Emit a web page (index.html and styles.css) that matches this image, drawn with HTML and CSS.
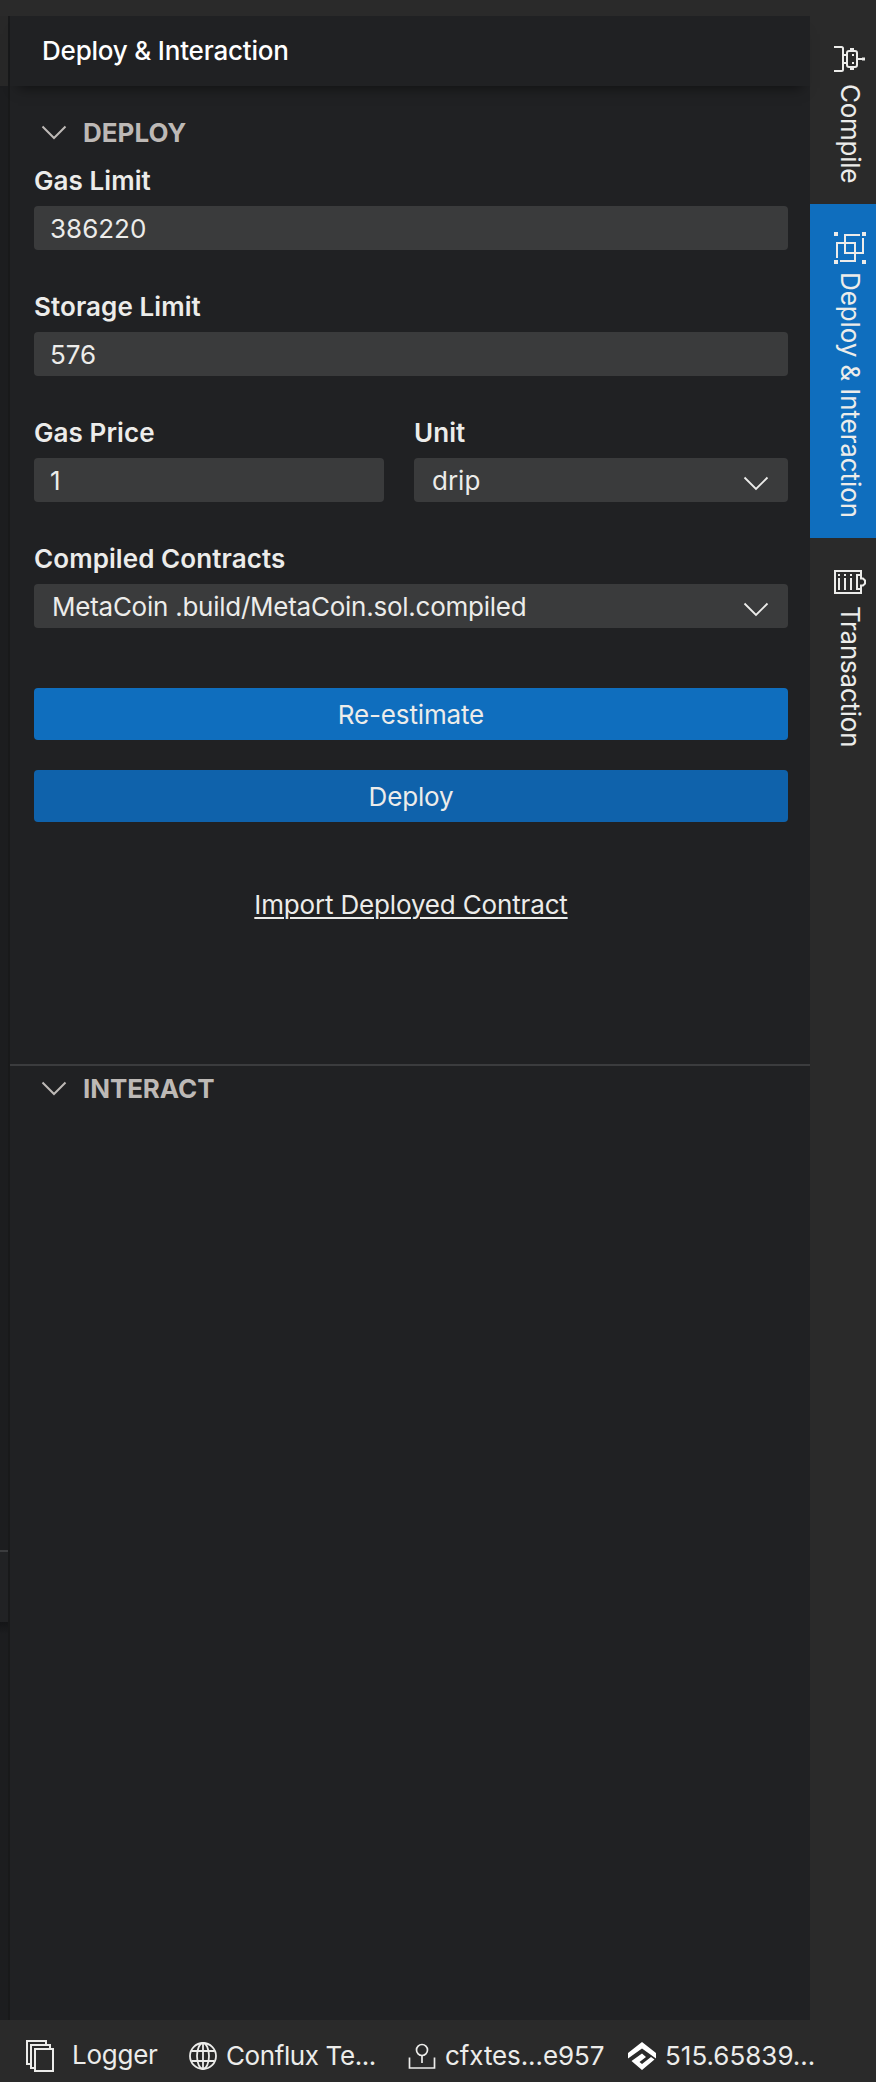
FILE: index.html
```html
<!DOCTYPE html>
<html lang="en">
<head>
<meta charset="utf-8">
<title>Deploy &amp; Interaction</title>
<link rel="stylesheet" href="styles.css">
</head>
<body>
<div class="app">
  <div class="titlebar"></div>
  <div class="workspace">
    <div class="editor-edge">
      <div class="edge-tabs"></div>
      <div class="edge-body"></div>
      <div class="edge-terminal-head"></div>
      <div class="edge-terminal"></div>
    </div>
    <main class="panel">
      <header class="panel-header"><span>Deploy &amp; Interaction</span></header>
      <section class="deploy">
        <h2 class="section-title">
          <svg class="chevron" width="26" height="16" viewBox="0 0 26 16"><path d="M1.500 1.500 13 13 24.500 1.500"/></svg>
          <span>DEPLOY</span>
        </h2>
        <div class="form">
          <div class="field"><label>Gas Limit</label><div class="input"><span>386220</span></div></div>
          <div class="field"><label>Storage Limit</label><div class="input"><span>576</span></div></div>
          <div class="field-row">
            <div class="field"><label>Gas Price</label><div class="input"><span>1</span></div></div>
            <div class="field"><label>Unit</label><div class="input select"><span>drip</span>
              <svg class="chevron" width="26" height="16" viewBox="0 0 26 16"><path d="M1.500 1.500 13 13 24.500 1.500"/></svg></div></div>
          </div>
          <div class="field"><label>Compiled Contracts</label><div class="input select"><span class="contract">MetaCoin .build/MetaCoin.sol.compiled</span>
            <svg class="chevron" width="26" height="16" viewBox="0 0 26 16"><path d="M1.500 1.500 13 13 24.500 1.500"/></svg></div></div>
        </div>
        <div class="actions">
          <div class="button"><span>Re-estimate</span></div>
          <div class="button pressed"><span>Deploy</span></div>
        </div>
        <div class="import"><a>Import Deployed Contract</a></div>
      </section>
      <section class="interact">
        <h2 class="section-title">
          <svg class="chevron" width="26" height="16" viewBox="0 0 26 16"><path d="M1.500 1.500 13 13 24.500 1.500"/></svg>
          <span>INTERACT</span>
        </h2>
      </section>
    </main>
    <nav class="tabs">
      <div class="tab tab-compile">
        <svg width="32" height="32" viewBox="0 0 32 32" fill="none" stroke="#ececea" stroke-width="2">
          <path d="M0 5h7.500q1.500 0 1.500 1.500v21q0 1.500-1.500 1.500H0M9 13h4M9 21h4"/>
          <rect x="13" y="9" width="10" height="16" rx="2"/>
          <path d="M16 7h4M16 27h4M24 17h5"/>
          <path d="M18 12h2v2h-2zM18 20h2v2h-2zM28 15.500h3v3h-3z" fill="#ececea" stroke="none"/>
        </svg>
        <span>Compile</span>
      </div>
      <div class="tab active">
        <svg width="32" height="32" viewBox="0 0 32 32" fill="none" stroke="#ececea" stroke-width="2">
          <path d="M0 0h4v4H0zM28 0h4v4h-4zM0 28h4v4H0zM28 28h4v4h-4z" fill="#ececea" stroke="none"/>
          <path d="M26 3H11v18h18V6M3 26V11h18v18H6"/>
        </svg>
        <span>Deploy &amp; Interaction</span>
      </div>
      <div class="tab">
        <svg width="32" height="32" viewBox="0 0 32 32" fill="none" stroke="#ececea" stroke-width="2">
          <path d="M27 10V5H1v22h26v-5"/>
          <path d="M27 9h-4v14h4M27 9v3.500h2l2 2v3l-2 2h-2V23"/>
          <path d="M5 12v12M11 12v12M17 12v12"/>
          <path d="M5 8v2M11 8v2M17 8v2"/>
        </svg>
        <span>Transaction</span>
      </div>
    </nav>
  </div>
  <footer class="statusbar">
    <div class="status logger">
      <svg width="30" height="34" viewBox="0 0 30 34" fill="none" stroke="#ececea" stroke-width="2">
        <path d="M4 25H1V2h19v3M8 29H5V6h19v3"/><rect x="9" y="10" width="18" height="22"/>
      </svg>
      <span>Logger</span>
    </div>
    <div class="status network">
      <svg width="30" height="30" viewBox="0 0 30 30" fill="none" stroke="#ececea" stroke-width="1.800">
        <circle cx="15" cy="15" r="13"/><ellipse cx="15" cy="15" rx="6" ry="13"/><path d="M15 2v26M3.500 10h23M3.500 20h23"/>
      </svg>
      <span>Conflux Te...</span>
    </div>
    <div class="status account">
      <svg width="28" height="28" viewBox="0 0 28 28" fill="none" stroke="#ececea" stroke-width="1.700">
        <circle cx="14" cy="8" r="5.500"/><path d="M14 13.500V21M1.500 15.500V26h25V15.500"/>
      </svg>
      <span>cfxtes...e957</span>
    </div>
    <div class="status balance">
      <svg width="28" height="28" viewBox="0 0 28 28" fill="#fff">
        <path d="M14 0 28 11v5.500L14 6.500 0 16.500V11z"/>
        <path d="M14 11.500 18 15l-6.500 5 2.500 2 9-7 3.500 2.500L14 28 3.500 19z"/>
      </svg>
      <span>515.65839...</span>
    </div>
  </footer>
</div>
</body>
</html>
```
FILE: styles.css
```css
* { box-sizing: border-box; }
body {
  margin: 0;
  background: #2a2a2a;
  color: #ececea;
  font-family: Inter, sans-serif;
  font-size: 26px;
  line-height: 36px;
}
.app { display: flex; flex-direction: column; width: 876px; height: 2082px; overflow: hidden; }
.titlebar { height: 16px; flex: none; }
.workspace { display: flex; flex: 1; min-height: 0; }
span, a { white-space: nowrap; }

/* Sliver of the editor pane left of the panel */
.editor-edge { width: 10px; border-right: 2px solid #18191a; background: #1c1d1f; display: flex; flex-direction: column; }
.edge-tabs { height: 70px; background: #282828; }
.edge-body { height: 1464px; }
.edge-terminal-head { height: 72px; border-top: 2px solid #3b3c3e; background: #212224; }
.edge-terminal { flex: 1; background: linear-gradient(#141517, #1c1d1f 12px); }

.panel { width: 800px; background: #202123; display: flex; flex-direction: column; }
.panel-header {
  height: 70px; padding: 0 32px; flex: none;
  display: flex; align-items: center;
  color: #fff; font-weight: 500; letter-spacing: -.2px;
  box-shadow: 0 10px 12px -8px rgba(0, 0, 0, .5);
}
.deploy { height: 978px; padding: 28px 22px 0 24px; }
.interact { border-top: 2px solid #3b3c3e; padding: 4px 22px 0 24px; flex: 1; }
.section-title {
  margin: 0; padding-left: 7px; height: 38px;
  display: flex; align-items: center; gap: 16px;
  font-size: 26px; font-weight: 700; line-height: 38px; color: #bdb9b6;
}
.interact .section-title { letter-spacing: -.1px; }
.chevron { fill: none; stroke: #bdb9b6; stroke-width: 2; flex: none; }

.form { display: flex; flex-direction: column; gap: 39px; padding-top: 11px; }
.field { display: flex; flex-direction: column; }
.field-row { display: grid; grid-template-columns: 350px 374px; gap: 30px; }
label { height: 43px; font-weight: 600; letter-spacing: .08px; }
.input {
  height: 44px; padding: 1px 16px 0; border-radius: 4px;
  background: #3a3b3c; display: flex; align-items: center;
}
.select { padding: 1px 19px 0 18px; justify-content: space-between; }
.select .chevron { stroke: #ececea; stroke-width: 1.8; margin-top: 7px; }
.contract { letter-spacing: -.25px; }

.actions { display: flex; flex-direction: column; gap: 30px; padding-top: 60px; }
.button {
  height: 52px; border-radius: 4px; background: #0f6ebe;
  display: flex; align-items: center; justify-content: center;
  padding-top: 2px; letter-spacing: -.15px;
}
.button.pressed { background: #0f62ab; }
.import { padding-top: 65px; text-align: center; letter-spacing: -.16px; }
.import a { text-decoration: underline; text-decoration-thickness: 2px; text-underline-offset: 3px; }

.tabs { width: 66px; display: flex; flex-direction: column; }
.tab {
  display: flex; flex-direction: column; align-items: center;
  width: 66px; gap: 8px; padding: 28px 0 0 14px;
}
.tab svg { flex: none; }
.tab span { writing-mode: vertical-rl; line-height: 36px; letter-spacing: -.1px; }
.tab:last-child span { letter-spacing: -.25px; }
.tab-compile { height: 188px; padding-top: 26px; gap: 10px; }
.tab-compile span { letter-spacing: -.25px; }
.tab.active { height: 334px; background: #0f6ebe; }

.statusbar { height: 62px; flex: none; display: flex; align-items: center; padding: 10px 0 0 26px; }
.status { display: flex; align-items: center; flex: none; }
.logger { width: 162px; gap: 16px; letter-spacing: -.25px; }
.logger span { padding-bottom: 2px; }
.network { width: 220px; gap: 8px; letter-spacing: -.4px; }
.account { width: 220px; gap: 9px; letter-spacing: -.1px; }
.balance { gap: 9px; }
```
